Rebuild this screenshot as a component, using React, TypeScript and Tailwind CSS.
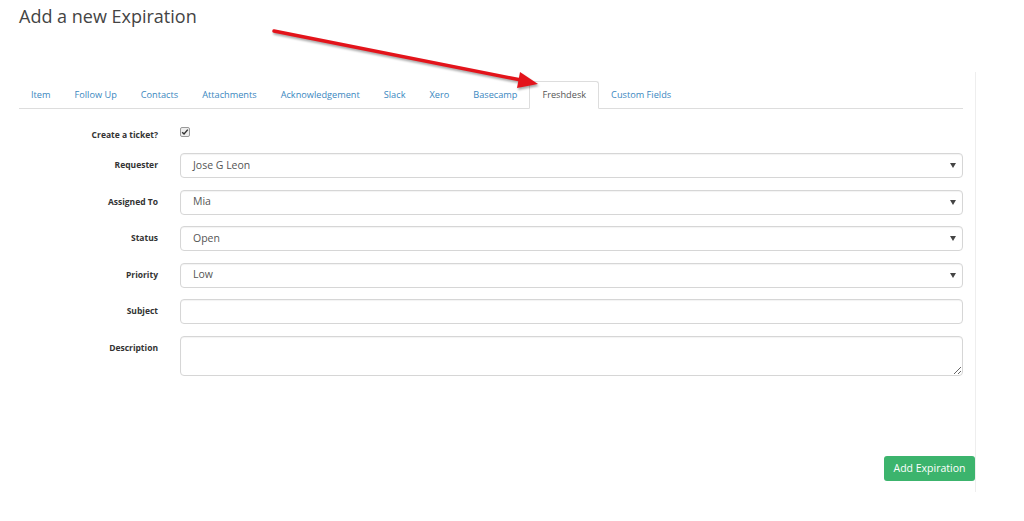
import { useState } from 'react';

const tabs = ['Item', 'Follow Up', 'Contacts', 'Attachments', 'Acknowledgement', 'Slack', 'Xero', 'Basecamp', 'Freshdesk', 'Custom Fields'];

function Caret() {
  return (
    <svg viewBox="0 0 6 5" className="w-[6px] h-[5px] text-[#444]" fill="currentColor">
      <path d="M0 0h6L3 5z" />
    </svg>
  );
}

function SelectField({ value }: { value: string }) {
  return (
    <div className="flex-1 h-[25px] border border-[#d6d6d6] rounded-[4px] shadow-[inset_0_1px_1px_rgba(0,0,0,0.05)] flex items-center justify-between pl-[12px] pr-[6px] text-[10.5px] text-[#555]">
      <span>{value}</span>
      <Caret />
    </div>
  );
}

function Row({ label, children }: { label: string; children: React.ReactNode }) {
  return (
    <div className="flex items-start gap-[22px] mb-[11.6px]">
      <label className="w-[139px] shrink-0 text-right text-[8.5px] leading-[14px] font-bold text-[#333] pt-[5px]">{label}</label>
      {children}
    </div>
  );
}

export default function App() {
  const [active] = useState('Freshdesk');

  return (
    <div className="relative w-[1024px] h-[521px] bg-white overflow-hidden" style={{ fontFamily: '"Open Sans", "Liberation Sans", sans-serif' }}>
      <h1 className="pl-[19px] pt-[4px] text-[18px] leading-[24px] text-[#444] font-normal">Add a new Expiration</h1>

      <div className="ml-[19px] mt-[44px] w-[957px] border-r border-[#eee] pt-[9px] pb-[11px]">
        <div className="mr-[12px] flex border-b border-[#ddd] h-[28px]">
          {tabs.map(t => (
            <div
              key={t}
              className={
                t === active
                  ? 'px-[12px] h-[28px] -mb-px flex items-center text-[9.2px] text-[#555] bg-white border border-[#ddd] border-b-white rounded-t-[3px]'
                  : 'px-[12px] h-[27px] flex items-center text-[9.2px] text-[#3a87c0]'
              }
            >
              {t}
            </div>
          ))}
        </div>

        <div className="mr-[12px] pt-[18px]">
          <div className="flex items-start gap-[22px] mb-[11px]">
            <label className="w-[139px] shrink-0 text-right text-[8.5px] leading-[14px] font-bold text-[#333] pt-[1px]">Create a ticket?</label>
            <div className="w-[10px] h-[10px] border border-[#999] rounded-[2px] bg-[#eee] flex items-center justify-center">
              <svg viewBox="0 0 10 10" className="w-[8px] h-[8px]" fill="none" stroke="#333" strokeWidth="1.8">
                <path d="M1.5 5.2l2.3 2.3L8.5 2" />
              </svg>
            </div>
          </div>

          <Row label="Requester"><SelectField value="Jose G Leon" /></Row>
          <Row label="Assigned To"><SelectField value="Mia" /></Row>
          <Row label="Status"><SelectField value="Open" /></Row>
          <Row label="Priority"><SelectField value="Low" /></Row>
          <Row label="Subject">
            <div className="flex-1 h-[25px] border border-[#d6d6d6] rounded-[4px] shadow-[inset_0_1px_1px_rgba(0,0,0,0.05)]" />
          </Row>
          <Row label="Description">
            <textarea className="flex-1 h-[40px] border border-[#d6d6d6] rounded-[4px] shadow-[inset_0_1px_1px_rgba(0,0,0,0.05)] outline-none" />
          </Row>
        </div>

        <div className="flex justify-end mt-[80px]">
          <button className="h-[25px] w-[91px] rounded-[3px] bg-[#3cb46d] text-white text-[10.5px]">Add Expiration</button>
        </div>
      </div>

      <svg className="absolute left-0 top-0 pointer-events-none" width="1024" height="521">
        <line x1="274" y1="31" x2="521" y2="80" stroke="#e3141b" strokeWidth="3.5" strokeLinecap="round" style={{ filter: 'drop-shadow(1px 2px 1px rgba(0,0,0,0.35))' }} />
        <polygon points="538,84 520,72 517,88" fill="#e3141b" style={{ filter: 'drop-shadow(1px 2px 1px rgba(0,0,0,0.35))' }} />
      </svg>
    </div>
  );
}
